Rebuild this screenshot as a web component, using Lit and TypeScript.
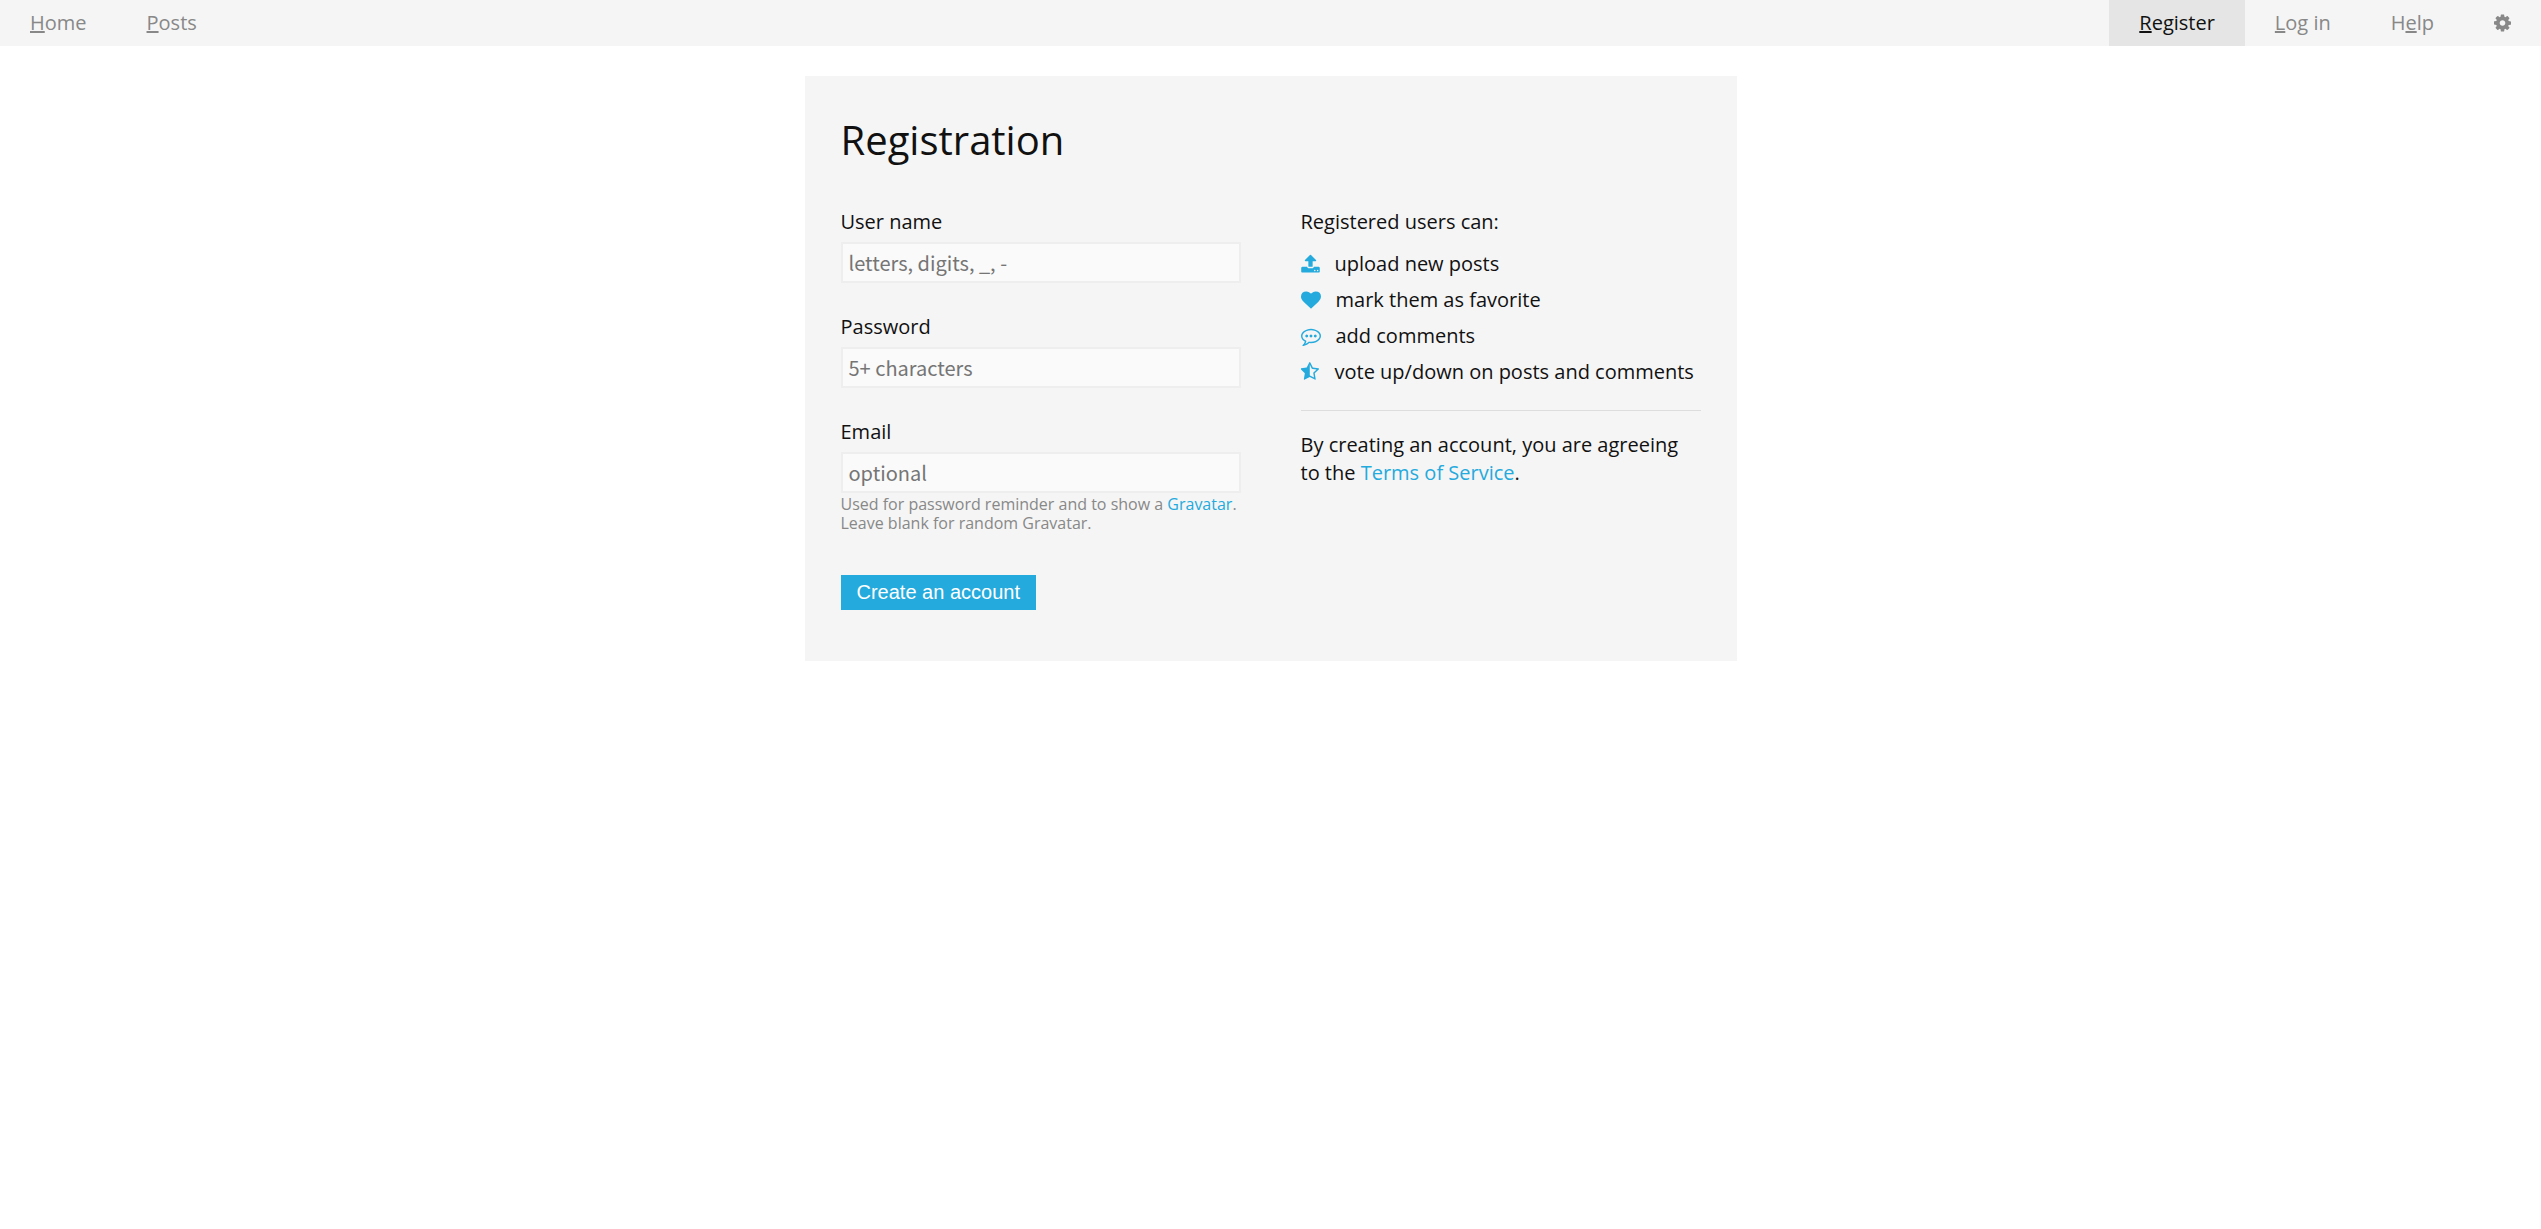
import { LitElement, css, html, svg } from "lit";
import { customElement } from "lit/decorators.js";

const icon = (width: number, viewBox: string, path: string) => html`
  <svg class="icon" width=${width} height="20" viewBox=${viewBox} aria-hidden="true">
    ${svg`<path d=${path}></path>`}
  </svg>
`;

const COG =
  "M1152 896q0-106-75-181t-181-75-181 75-75 181 75 181 181 75 181-75 75-181zm512-109v222q0 12-8 23t-20 13l-185 28q-19 54-39 91 35 50 107 138 10 12 10 25t-9 23q-27 37-99 108t-94 71q-12 0-26-9l-138-108q-44 23-91 38-16 136-29 186-7 28-36 28h-222q-14 0-24.5-8.5t-11.5-21.5l-28-184q-49-16-90-37l-141 107q-10 9-25 9-14 0-25-11-126-114-165-168-7-10-7-23 0-12 8-23 15-21 51-66.5t54-70.5q-27-50-41-99l-183-27q-13-2-21-12.5t-8-23.5v-222q0-12 8-23t19-13l186-28q14-46 39-92-40-57-107-138-10-12-10-24 0-10 9-23 26-36 98.5-107.5t94.5-71.5q13 0 26 10l138 107q44-23 91-38 16-136 29-186 7-28 36-28h222q14 0 24.5 8.5t11.5 21.5l28 184q49 16 90 37l142-107q9-9 24-9 13 0 25 10 129 119 165 170 7 8 7 22 0 12-8 23-15 21-51 66.5t-54 70.5q26 50 41 98l183 28q13 2 21 12.5t8 23.5z";
const UPLOAD =
  "M1344 1472q0-26-19-45t-45-19-45 19-19 45 19 45 45 19 45-19 19-45zm256 0q0-26-19-45t-45-19-45 19-19 45 19 45 45 19 45-19 19-45zm128-224v320q0 40-28 68t-68 28h-1472q-40 0-68-28t-28-68v-320q0-40 28-68t68-28h427q21 56 70.5 92t110.5 36h256q61 0 110.5-36t70.5-92h427q40 0 68 28t28 68zm-325-648q-17 40-59 40h-256v448q0 26-19 45t-45 19h-256q-26 0-45-19t-19-45v-448h-256q-42 0-59-40-17-39 14-69l448-448q18-19 45-19t45 19l448 448q31 30 14 69z";
const HEART =
  "M896 1664q-26 0-44-18l-624-602q-10-8-27.5-26t-55.5-65.5-68-97.5-53.5-121-23.5-138q0-220 127-344t351-124q62 0 126.5 21.5t120 58 95.5 68.5 76 68q36-36 76-68t95.5-68.5 120-58 126.5-21.5q224 0 351 124t127 344q0 221-229 450l-623 600q-18 18-44 18z";
const COMMENT =
  "M640 896q0 53-37.5 90.5t-90.5 37.5-90.5-37.5-37.5-90.5 37.5-90.5 90.5-37.5 90.5 37.5 37.5 90.5zm384 0q0 53-37.5 90.5t-90.5 37.5-90.5-37.5-37.5-90.5 37.5-90.5 90.5-37.5 90.5 37.5 37.5 90.5zm384 0q0 53-37.5 90.5t-90.5 37.5-90.5-37.5-37.5-90.5 37.5-90.5 90.5-37.5 90.5 37.5 37.5 90.5zm-512-512q-204 0-381.5 69.5t-282 187.5-104.5 255q0 112 71.5 213.5t201.5 175.5l87 50-27 96q-24 91-70 172 152-63 275-171l43-38 57 6q69 8 130 8 204 0 381.5-69.5t282-187.5 104.5-255-104.5-255-282-187.5-381.5-69.5zm896 512q0 174-120 321.5t-326 233-450 85.5q-70 0-145-8-198 175-460 242-49 14-114 22h-5q-15 0-27-10.5t-16-27.5v-1q-3-4-.5-12t2-10 4.5-9.5l6-9 7-8.5 8-9q7-8 31-34.5t34.5-38 31-39.5 32.5-51 27-59 26-76q-157-89-247.5-220t-90.5-281q0-130 71-248.5t191-204.5 286-136.5 348-50.5 348 50.5 286 136.5 191 204.5 71 248.5z";
const STAR =
  "M1186 925l257-250-356-52-66-10-30-60-159-322v963l59 31 318 168-60-355-12-66zm452-262l-363 354 86 500q5 33-6 51.5t-34 18.5q-17 0-40-12l-449-236-449 236q-23 12-40 12-23 0-34-18.5t-6-51.5l86-500-364-354q-32-32-23-59.5t54-34.5l502-73 225-455q20-41 49-41 28 0 49 41l225 455 502 73q45 7 54 34.5t-24 59.5z";

const WIDE = "0 0 1792 1792";
const MEDIUM = "64 0 1664 1792";
const NARROW = "128 0 1536 1792";

@customElement("app-root")
export class AppRoot extends LitElement {
  static styles = css`
    :host {
      display: block;
      color: #111;
      font: 20px/28px "Open Sans", sans-serif;
    }
    * {
      box-sizing: border-box;
    }
    a {
      color: #24aadd;
      text-decoration: none;
    }
    .icon {
      display: block;
      flex: none;
      margin-top: 4px;
      fill: currentColor;
    }
    .nav {
      display: flex;
      background: #f5f5f5;
    }
    .item {
      display: flex;
      padding: 9px 30px;
      color: #888;
    }
    .spacer {
      flex: 1;
    }
    .active {
      background: #e5e5e5;
      color: #111;
    }
    .key {
      text-decoration: underline 2px;
    }
    .panel {
      max-width: 932px;
      margin: 30px auto;
      padding: 36px 36px 51px;
      background: #f5f5f5;
    }
    .title {
      margin: 0 0 40px;
      font-size: 40px;
      font-weight: 400;
      line-height: 56px;
    }
    .columns {
      display: grid;
      grid-template-columns: repeat(auto-fit, minmax(320px, 1fr));
      gap: 60px;
    }
    .field {
      margin-bottom: 30px;
    }
    .label {
      display: block;
      margin-bottom: 6px;
    }
    .input {
      display: block;
      width: 100%;
      height: 41px;
      padding: 0 6px;
      border: 2px solid #eee;
      border-radius: 0;
      background: #fafafa;
      color: #111;
      font: 20px "Noto Sans CJK SC", sans-serif;
    }
    .input::placeholder {
      color: #757575;
      opacity: 1;
    }
    .hint {
      margin: 2px 0 42px;
      color: #888;
      font-size: 16px;
      line-height: 19px;
    }
    .submit {
      display: block;
      height: 35px;
      padding: 0 16px;
      border: 0;
      background: #24aadd;
      color: #fff;
      font: 20px "Liberation Sans", sans-serif;
    }
    .intro {
      margin: 0 0 14px;
    }
    .perks {
      display: grid;
      gap: 8px;
      margin: 0;
      padding: 0 0 24px;
      border-bottom: 1px solid #ddd;
      list-style: none;
    }
    .perk {
      display: flex;
      gap: 15px;
    }
    .perk .icon {
      color: #24aadd;
    }
    .terms {
      margin: 20px 0 0;
    }
  `;

  private submit(event: Event) {
    event.preventDefault();
  }

  render() {
    return html`
      <nav class="nav">
        <a class="item" href="#home" accesskey="h"><span><span class="key">H</span>ome</span></a>
        <a class="item" href="#posts" accesskey="p"><span><span class="key">P</span>osts</span></a>
        <span class="spacer"></span>
        <a class="item active" href="#register" accesskey="r"><span><span class="key">R</span>egister</span></a>
        <a class="item" href="#login" accesskey="l"><span><span class="key">L</span>og in</span></a>
        <a class="item" href="#help" accesskey="e"><span>H<span class="key">e</span>lp</span></a>
        <a class="item" href="#settings" aria-label="Settings">${icon(17, NARROW, COG)}</a>
      </nav>
      <main class="panel">
        <h1 class="title">Registration</h1>
        <div class="columns">
          <form class="form" @submit=${this.submit}>
            <div class="field">
              <label class="label" for="name">User name</label>
              <input class="input" id="name" type="text" placeholder="letters, digits, _, -" />
            </div>
            <div class="field">
              <label class="label" for="password">Password</label>
              <input class="input" id="password" type="password" placeholder="5+ characters" />
            </div>
            <label class="label" for="email">Email</label>
            <input class="input" id="email" type="email" placeholder="optional" aria-describedby="hint" />
            <p class="hint" id="hint">
              Used for password reminder and to show a <a href="#gravatar">Gravatar</a>.<br />Leave blank for random
              Gravatar.
            </p>
            <button class="submit" type="submit">Create an account</button>
          </form>
          <section>
            <p class="intro">Registered users can:</p>
            <ul class="perks">
              <li class="perk">${icon(19, MEDIUM, UPLOAD)}<span>upload new posts</span></li>
              <li class="perk">${icon(20, WIDE, HEART)}<span>mark them as favorite</span></li>
              <li class="perk">${icon(20, WIDE, COMMENT)}<span>add comments</span></li>
              <li class="perk">${icon(19, MEDIUM, STAR)}<span>vote up/down on posts and comments</span></li>
            </ul>
            <p class="terms">
              By creating an account, you are agreeing to the <a href="#tos">Terms of Service</a>.
            </p>
          </section>
        </div>
      </main>
    `;
  }
}
